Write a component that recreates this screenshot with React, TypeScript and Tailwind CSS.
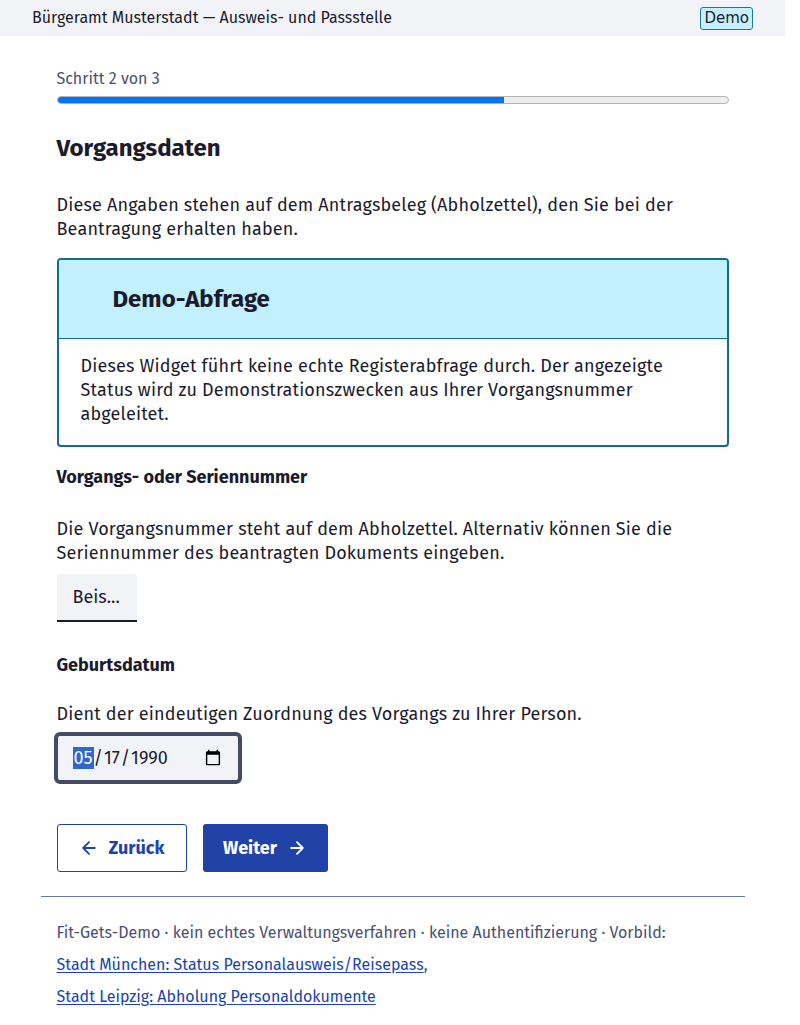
import { useState } from "react";

const sans = "font-['Fira_Sans','Open_Sans',sans-serif]";
const body = "text-[18px] leading-[24px] tracking-[0.17px]";

export default function App() {
  const [birth, setBirth] = useState("1990-05-17");

  return (
    <div className={`${sans} min-h-screen w-[785px] bg-white text-[#1b1b2e]`}>
      {/* Header */}
      <header className="flex h-9 items-center justify-between bg-[#f2f3f7] pl-8 pr-[32px]">
        <span className="text-[16px]">Bürgeramt Musterstadt — Ausweis- und Passstelle</span>
        <span className="rounded-[3px] border border-[#1a7a94] bg-[#c6f1fc] px-[3px] font-['DejaVu_Sans',sans-serif] text-[15px] leading-[21px]">
          Demo
        </span>
      </header>

      <main className="mx-auto w-[704px] px-4 pt-8">
        {/* Progress */}
        <p className="text-[16px] leading-[22px] text-[#4a5070]">Schritt 2 von 3</p>
        <div className="mt-[6px] h-2 w-full overflow-hidden rounded-full border border-[#b4b4b4] bg-[#eeeeee]">
          <div className="h-full w-2/3 bg-[#0073ff]" />
        </div>

        <h1 className="mt-[28px] text-[24px] font-bold leading-[32px]">Vorgangsdaten</h1>

        <p className={`mt-[29px] ${body}`}>
          Diese Angaben stehen auf dem Antragsbeleg (Abholzettel), den Sie bei der Beantragung erhalten haben.
        </p>

        {/* Demo box */}
        <section className="mt-[17px] overflow-hidden rounded-[4px] border-2 border-[#0f6f8a]">
          <div className="flex h-[79px] items-center border-b border-[#0f6f8a] bg-[#c2f0fd] pl-[54px]">
            <h2 className="text-[24px] font-bold">Demo-Abfrage</h2>
          </div>
          <p className={`px-[22px] pt-[15px] pb-[19px] ${body}`}>
            Dieses Widget führt keine echte Registerabfrage durch. Der angezeigte Status wird zu
            Demonstrationszwecken aus Ihrer Vorgangsnummer abgeleitet.
          </p>
        </section>

        {/* Vorgangsnummer */}
        <label className="mt-[17px] block text-[18px] font-bold leading-[26px]">Vorgangs- oder Seriennummer</label>
        <p className={`mt-[27px] ${body}`}>
          Die Vorgangsnummer steht auf dem Abholzettel. Alternativ können Sie die Seriennummer des beantragten
          Dokuments eingeben.
        </p>
        <div className="mt-[9px] flex h-12 w-[80px] items-center rounded-t-[3px] border-b-2 border-[#1b1b2e] bg-[#f2f3f7] px-4 text-[18px]">
          Beis...
        </div>

        {/* Geburtsdatum */}
        <label className="mt-[30px] block text-[18px] font-bold leading-[26px]">Geburtsdatum</label>
        <p className={`mt-[24px] ${body}`}>Dient der eindeutigen Zuordnung des Vorgangs zu Ihrer Person.</p>
        <input
          type="date"
          autoFocus
          value={birth}
          onChange={(e) => setBirth(e.target.value)}
          className="-ml-[3px] mt-[6px] h-[52px] w-[188px] rounded-[6px] border-4 border-[#454a66] bg-[#f2f3f7] pl-[15px] pr-[14px] text-[18px] outline-none"
        />

        {/* Navigation */}
        <div className="mt-[40px] flex gap-4">
          <button className="flex h-12 w-[130px] items-center justify-center gap-[10px] rounded-[3px] border border-[#2143a8] bg-white text-[18px] font-bold text-[#2143a8]">
            <svg width="20" height="20" viewBox="0 0 24 24" fill="none" stroke="currentColor" strokeWidth="2.2" strokeLinecap="round" strokeLinejoin="round">
              <path d="M19 12H5M12 19l-7-7 7-7" />
            </svg>
            Zurück
          </button>
          <button className="flex h-12 w-[125px] items-center justify-center gap-[10px] rounded-[3px] bg-[#2143a8] text-[18px] font-bold text-white">
            Weiter
            <svg width="20" height="20" viewBox="0 0 24 24" fill="none" stroke="currentColor" strokeWidth="2.2" strokeLinecap="round" strokeLinejoin="round">
              <path d="M5 12h14M12 5l7 7-7 7" />
            </svg>
          </button>
        </div>
      </main>

      {/* Footer */}
      <footer className="mx-auto mt-6 w-[704px] border-t border-[#6b76a8] px-4 pt-[20px] pb-6 text-[16px] leading-[32px] text-[#4a5070]">
        <p>Fit-Gets-Demo · kein echtes Verwaltungsverfahren · keine Authentifizierung · Vorbild:</p>
        <p>
          <a href="#" className="text-[#2143a8] underline underline-offset-2">
            Stadt München: Status Personalausweis/Reisepass
          </a>
          ,
        </p>
        <p>
          <a href="#" className="text-[#2143a8] underline underline-offset-2">
            Stadt Leipzig: Abholung Personaldokumente
          </a>
        </p>
      </footer>
    </div>
  );
}
